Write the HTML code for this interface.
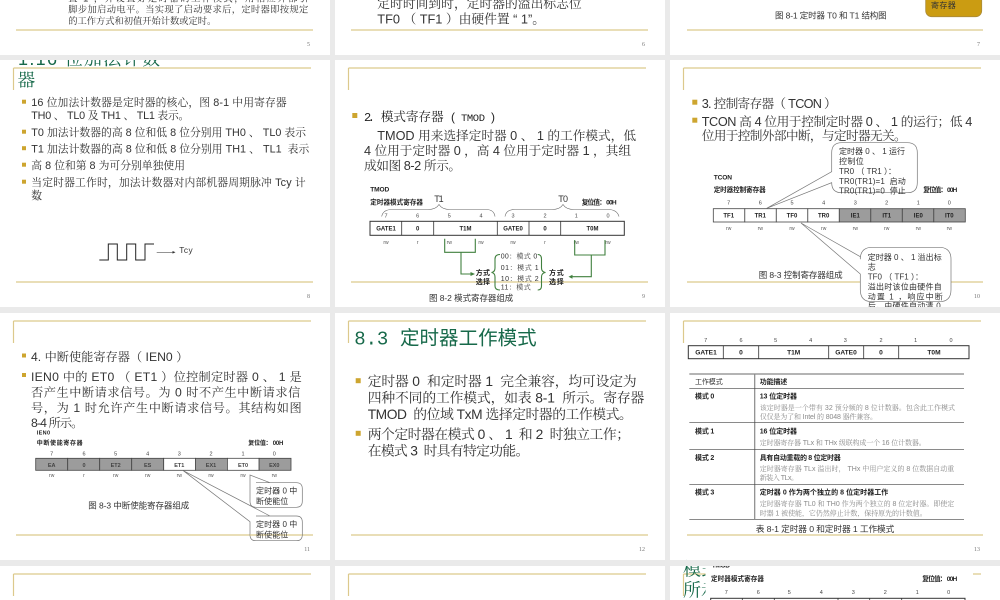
<!DOCTYPE html>
<html lang="zh"><head><meta charset="utf-8"><title>定时器</title>
<style>
html,body{margin:0;padding:0;background:#fff;width:1000px;height:600px;overflow:hidden}
svg{display:block;filter:blur(.35px)}
text{white-space:pre}
.s{font-family:"Liberation Sans","Noto Serif CJK SC",serif;fill:#333}
.h{font-family:"Liberation Sans","Noto Sans CJK SC",sans-serif;fill:#333}
.hb{font-family:"Liberation Sans","Noto Sans CJK SC",sans-serif;fill:#222;font-weight:700}
.g{font-family:"Liberation Sans","Noto Serif CJK SC",serif;fill:#17694a}
.m{font-family:"Liberation Mono","Noto Serif CJK SC",monospace}
.n{font-family:"Liberation Serif",serif;font-size:6px;fill:#777;text-anchor:end}
.c{text-anchor:middle}
.f5{font-size:5px;fill:#555}
.f55{font-size:5.5px;fill:#444}
.f6{font-size:6px}
.f65{font-size:6.6px}
.f7{font-size:7px}
.f8{font-size:8px}
.f85{font-size:8.5px}
.f93{font-size:9.3px}
.f108{font-size:10.8px}
.f122{font-size:12.2px}
.f127{font-size:12.7px}
.f138{font-size:13.8px}
.gy{fill:#8a8a8a}
.hl{stroke:#dcc98c;stroke-width:1.2;fill:none}
.box{fill:#fff;stroke:#333;stroke-width:1}
.cell{fill:#9c9c9c;stroke:#444;stroke-width:.8}
.wc{fill:#fff;stroke:#444;stroke-width:.8}
.gr{fill:none;stroke:#41803f;stroke-width:1.1}
.cal{fill:#fff;stroke:#777;stroke-width:.7}
.bl{fill:#cda52f}
</style></head><body>
<svg width="1000" height="600" viewBox="0 0 1000 600" xmlns="http://www.w3.org/2000/svg">
<defs><clipPath id="c8"><rect x="0" y="60" width="330" height="40"/></clipPath></defs>
<rect width="1000" height="600" fill="#fff"/>

<!-- header + footer frames -->
<path class="hl" d="M13.5 8H311M13.5 8V30" transform="translate(0,60)"/>
<path class="hl" d="M13.5 8H311M13.5 8V30" transform="translate(335,60)"/>
<path class="hl" d="M13.5 8H311M13.5 8V30" transform="translate(670,60)"/>
<path class="hl" d="M13.5 8H311M13.5 8V30" transform="translate(0,313)"/>
<path class="hl" d="M13.5 8H311M13.5 8V30" transform="translate(335,313)"/>
<path class="hl" d="M13.5 8H311M13.5 8V30" transform="translate(670,313)"/>
<path class="hl" d="M13.5 8H311M13.5 8V30" transform="translate(0,566)"/>
<path class="hl" d="M13.5 8H311M13.5 8V30" transform="translate(335,566)"/>
<path class="hl" d="M13.5 8H311M13.5 8V30" transform="translate(670,566)"/>
<path class="hl" d="M16 30H313M351 30H648M687 30H983M16 282H313M351 282H648M687 282H983M16 535H313M351 535H648M687 535H983"/>

<text class="n" x="310" y="46">5</text><text class="n" x="645" y="46">6</text><text class="n" x="980" y="46">7</text>
<text class="n" x="310" y="298">8</text><text class="n" x="645" y="298">9</text><text class="n" x="980" y="298">10</text>
<text class="n" x="310" y="551">11</text><text class="n" x="645" y="551">12</text><text class="n" x="980" y="551">13</text>

<!-- slide 5 -->
<text class="s f93" x="68.3" y="1.5" textLength="240">置 1 &#xFF0C;并设置好定时器的工作模式&#xFF0C;用相应外部引</text>
<text class="s f93" x="68.3" y="12.5" textLength="240">脚步加启动电平。当实现了启动要求后&#xFF0C;定时器即按规定</text>
<text class="s f93" x="68.3" y="24" textLength="148">的工作方式和初值开始计数或定时。</text>

<!-- slide 6 -->
<text class="s" font-size="12.8" x="377.3" y="8" textLength="204.4">定时时间到时&#xFF0C;定时器的溢出标志位</text>
<text class="s" font-size="12.8" x="377.3" y="23.5" textLength="167.7">TF0 &#xFF08; TF1 &#xFF09;由硬件置 “ 1”。</text>

<!-- slide 7 -->
<text class="h f85" x="775" y="18.5" textLength="111.7">图 8-1 定时器 T0 和 T1 结构图</text>
<rect x="925.7" y="-12" width="56" height="28.7" rx="6" fill="#cb9c12" stroke="#a98a3a" stroke-width=".8"/>
<text class="h f8" x="931" y="8" textLength="24.7">寄存器</text>

<!-- slide 8 -->
<g clip-path="url(#c8)"><text class="g" font-size="18" x="18" y="65" textLength="142">1.16 位加法计数</text></g>
<text class="g" font-size="17.7" x="17.5" y="86">器</text>
<rect class="bl" x="22" y="99.7" width="4" height="4"/>
<text class="s f108" x="31.3" y="106" textLength="255.4">16 位加法计数器是定时器的核心&#xFF0C;图 8-1 中用寄存器</text>
<text class="s f108" x="31.3" y="119" textLength="158">TH0 、 TL0 及 TH1 、 TL1 表示。</text>
<rect class="bl" x="22" y="129.7" width="4" height="4"/>
<text class="s f108" x="31.3" y="136" textLength="274.7">T0 加法计数器的高 8 位和低 8 位分别用 TH0 、 TL0 表示</text>
<rect class="bl" x="22" y="146.2" width="4" height="4"/>
<text class="s f108" x="31.3" y="152.5" textLength="278">T1 加法计数器的高 8 位和低 8 位分别用 TH1 、 TL1  表示</text>
<rect class="bl" x="22" y="162.7" width="4" height="4"/>
<text class="s f108" x="31.3" y="169" textLength="153.7">高 8 位和第 8 为可分别单独使用</text>
<rect class="bl" x="22" y="179.7" width="4" height="4"/>
<text class="s f108" x="31.3" y="186" textLength="274.4">当定时器工作时&#xFF0C;加法计数器对内部机器周期脉冲 Tcy 计</text>
<text class="s f108" x="31.3" y="199" textLength="15.4">数。</text>
<path d="M99.3 260H108.3V244H117.3V260H126.7V244H135.7V260H145V244H154" fill="none" stroke="#222" stroke-width="1"/>
<path d="M156.7 252.3H173" stroke="#555" stroke-width=".7"/><path d="M172.5 251L175.5 252.3L172.5 253.6Z" fill="#333"/>
<text class="h" font-size="8.3" x="179.3" y="253" textLength="13.4">Tcy</text>

<!-- slide 9 -->
<rect class="bl" x="352.3" y="113" width="5" height="5"/>
<text class="m" font-size="12" x="364" y="121" fill="#222" textLength="11">2.</text>
<text class="s f127" x="380.7" y="121" style="fill:#222" textLength="63">模式寄存器</text>
<text class="s" font-size="12" x="451" y="121" style="fill:#222">(</text>
<text class="m" font-size="10.5" x="461" y="121" fill="#222" textLength="24">TMOD</text>
<text class="s" font-size="12" x="491" y="121" style="fill:#222">)</text>
<text class="s f127" x="377.3" y="140" textLength="258.7">TMOD 用来选择定时器 0 、 1 的工作模式&#xFF0C;低</text>
<text class="s f127" x="364" y="155" textLength="267">4 位用于定时器 0 &#xFF0C;高 4 位用于定时器 1 &#xFF0C;其组</text>
<text class="s f127" x="364" y="170" textLength="97">成如图 8-2 所示。</text>

<text class="hb f65" x="370.3" y="191.5" textLength="19">TMOD</text>
<text class="hb f65" x="370.3" y="204.5" textLength="52.7">定时器模式寄存器</text>
<text class="h" font-size="9" x="434.3" y="202" textLength="9.4">T1</text>
<text class="h" font-size="9" x="558.3" y="202" textLength="9.7">T0</text>
<text class="hb f65" x="581.7" y="204.5" textLength="35">复位值&#xFF1A; 00H</text>
<path d="M381.7 216.5Q383 209.5 392 209.5H428Q436 209.5 439 204.5Q442 209.5 450 209.5H486Q494 209.5 495 216.5M505 216.5Q506 209.5 515 209.5H552Q560 209.5 563 204.5Q566 209.5 574 209.5H608Q617 209.5 619 216.5" fill="none" stroke="#666" stroke-width=".6"/>
<text class="c h f55" x="386" y="217.5">7</text><text class="c h f55" x="417.7" y="217.5">6</text><text class="c h f55" x="449.3" y="217.5">5</text><text class="c h f55" x="481" y="217.5">4</text><text class="c h f55" x="513" y="217.5">3</text><text class="c h f55" x="545" y="217.5">2</text><text class="c h f55" x="576.3" y="217.5">1</text><text class="c h f55" x="608" y="217.5">0</text>
<rect class="box" x="370" y="221.3" width="254.3" height="14"/>
<path d="M401.7 221.3V235.3M433.7 221.3V235.3M497.3 221.3V235.3M529 221.3V235.3M560.7 221.3V235.3" stroke="#333" stroke-width=".8"/>
<text class="hb c f6" x="386" y="230.5">GATE1</text><text class="hb c f6" x="417.7" y="230.5">0</text><text class="hb c f6" x="465.5" y="230.5">T1M</text><text class="hb c f6" x="513" y="230.5">GATE0</text><text class="hb c f6" x="545" y="230.5">0</text><text class="hb c f6" x="592.5" y="230.5">T0M</text>
<text class="h c f5" x="386" y="244">rw</text><text class="h c f5" x="417.7" y="244">r</text><text class="h c f5" x="449.3" y="244">rw</text><text class="h c f5" x="481" y="244">rw</text><text class="h c f5" x="513" y="244">rw</text><text class="h c f5" x="545" y="244">r</text><text class="h c f5" x="576.3" y="244">rw</text><text class="h c f5" x="608" y="244">rw</text>
<path class="gr" d="M444.7 238.7V252.3H475.3V238.7M461 252.3V274H471M574.7 240V255H605V240M591.3 255V276.7H572"/>
<path d="M470.5 272L475 274L470.5 276ZM572.5 274.7L568.5 276.7L572.5 278.7Z" fill="#41803f"/>
<path class="gr" d="M500 254.5Q495 254.5 495 259V268Q495 272 491.5 272.5Q495 273 495 277V286Q495 290 500 290M537.7 254.5Q541.5 254.5 541.5 259V268Q541.5 272 545.5 272.5Q541.5 273 541.5 277V286Q541.5 290 537.7 290"/>
<text class="hb f7" x="475.7" y="275" textLength="14.3">方式</text><text class="hb f7" x="475.7" y="284" textLength="14.3">选择</text>
<text class="hb f7" x="549" y="275" textLength="14.7">方式</text><text class="hb f7" x="549" y="284" textLength="14.7">选择</text>
<text class="s f7" x="500.7" y="258.5" textLength="36.6">00&#xFF1A;模式 0</text>
<text class="s f7" x="500.7" y="270" textLength="38">01&#xFF1A;模式 1</text>
<text class="s f7" x="500.7" y="281" textLength="38">10&#xFF1A;模式 2</text>
<text class="s f7" x="500.7" y="289.5" textLength="30">11&#xFF1A;模式</text>
<text class="h f85" x="429" y="301" textLength="84.3">图 8-2 模式寄存器组成</text>

<!-- slide 10 -->
<rect class="bl" x="692.3" y="99.7" width="5" height="5"/>
<text class="s f127" x="701.7" y="108" textLength="135">3. 控制寄存器&#xFF08; TCON &#xFF09;</text>
<rect class="bl" x="692.3" y="117.7" width="5" height="5"/>
<text class="s f127" x="701.7" y="126" textLength="270.6">TCON 高 4 位用于控制定时器 0 、 1 的运行&#xFF1B;低 4</text>
<text class="s f127" x="701.7" y="140" textLength="205">位用于控制外部中断&#xFF0C;与定时器无关。</text>

<text class="hb f65" x="713.7" y="179.5" textLength="18.3">TCON</text>
<text class="hb f65" x="713.7" y="192" textLength="52">定时器控制寄存器</text>
<text class="hb f65" x="923.3" y="192" textLength="34">复位值&#xFF1A; 00H</text>
<text class="h c f55" x="728.7" y="204.5">7</text><text class="h c f55" x="760.3" y="204.5">6</text><text class="h c f55" x="792" y="204.5">5</text><text class="h c f55" x="823.7" y="204.5">4</text><text class="h c f55" x="855.3" y="204.5">3</text><text class="h c f55" x="886.7" y="204.5">2</text><text class="h c f55" x="918.3" y="204.5">1</text><text class="h c f55" x="949.3" y="204.5">0</text>
<rect class="wc" x="713.3" y="208.7" width="31.5" height="13.3"/><rect class="wc" x="744.8" y="208.7" width="31.5" height="13.3"/><rect class="wc" x="776.3" y="208.7" width="31.5" height="13.3"/><rect class="wc" x="807.8" y="208.7" width="31.5" height="13.3"/>
<rect class="cell" x="839.3" y="208.7" width="31.5" height="13.3"/><rect class="cell" x="870.8" y="208.7" width="31.5" height="13.3"/><rect class="cell" x="902.3" y="208.7" width="31.5" height="13.3"/><rect class="cell" x="933.8" y="208.7" width="31.5" height="13.3"/>
<text class="hb c f6" x="728.7" y="217.5">TF1</text><text class="hb c f6" x="760.3" y="217.5">TR1</text><text class="hb c f6" x="792" y="217.5">TF0</text><text class="hb c f6" x="823.7" y="217.5">TR0</text><text class="hb c f6" x="855.3" y="217.5">IE1</text><text class="hb c f6" x="886.7" y="217.5">IT1</text><text class="hb c f6" x="918.3" y="217.5">IE0</text><text class="hb c f6" x="949.3" y="217.5">IT0</text>
<text class="h c f5" x="728.7" y="230">rw</text><text class="h c f5" x="760.3" y="230">rw</text><text class="h c f5" x="792" y="230">rw</text><text class="h c f5" x="823.7" y="230">rw</text><text class="h c f5" x="855.3" y="230">rw</text><text class="h c f5" x="886.7" y="230">rw</text><text class="h c f5" x="918.3" y="230">rw</text><text class="h c f5" x="949.3" y="230">rw</text>
<text class="h f85" x="758.7" y="278" textLength="84">图 8-3 控制寄存器组成</text>
<path class="cal" d="M841.7 142.7H907.3Q917.3 142.7 917.3 152.7V182.7Q917.3 192.7 907.3 192.7H841.7Q831.7 192.7 831.7 182.7L766.7 208.3L831.7 171.7V152.7Q831.7 142.7 841.7 142.7Z"/>
<text class="h f8" x="839" y="154" textLength="66">定时器 0 、 1 运行</text>
<text class="h f8" x="839" y="164" textLength="24.7">控制位</text>
<text class="h f8" x="839" y="174" textLength="57">TR0 &#xFF08; TR1 &#xFF09;&#xFF1A;</text>
<text class="h f8" x="839" y="184" textLength="66.7">TR0(TR1)=1  启动</text>
<text class="h f8" x="839" y="193.3" textLength="66.7">TR0(TR1)=0  停止</text>
<path class="cal" d="M872.3 247.3H939Q951 247.3 951 259.3V289.7Q951 301.7 939 301.7H872.3Q860.3 301.7 860.3 289.7V274L801 223L860.3 256.7V259.3Q860.3 247.3 872.3 247.3Z"/>
<text class="h f8" x="867.7" y="260" textLength="74">定时器 0 、 1 溢出标</text>
<text class="h f8" x="867.7" y="269.7">志</text>
<text class="h f8" x="867.7" y="279.3" textLength="55.3">TF0 &#xFF08; TF1 &#xFF09;&#xFF1A;</text>
<text class="h f8" x="867.7" y="289.3" textLength="74">溢出时该位由硬件自</text>
<text class="h f8" x="867.7" y="299.3" textLength="75">动置 1 &#xFF0C;响应中断</text>
<text class="h f8" x="867.7" y="308.5" textLength="73">后&#xFF0C;由硬件自动清 0</text>

<!-- slide 11 -->
<rect class="bl" x="22" y="353.5" width="4" height="4"/>
<text class="s f122" x="31" y="361" textLength="157.3">4. 中断使能寄存器&#xFF08; IEN0 &#xFF09;</text>
<rect class="bl" x="22" y="373" width="4" height="4"/>
<text class="s f122" x="31" y="381" textLength="270.7">IEN0 中的 ET0 &#xFF08; ET1 &#xFF09;位控制定时器 0 、 1 是</text>
<text class="s f122" x="31" y="396.5" textLength="269.3">否产生中断请求信号。为 0 时不产生中断请求信</text>
<text class="s f122" x="31" y="412" textLength="270.7">号&#xFF0C;为 1 时允许产生中断请求信号。其结构如图</text>
<text class="s f122" x="31" y="427" textLength="52.3">8-4 所示。</text>
<text class="hb" font-size="5.5" x="36.7" y="434.5" textLength="13.3">IEN0</text>
<text class="hb f6" x="36.7" y="445" textLength="46">中断使能寄存器</text>
<text class="hb f6" x="248.3" y="445" textLength="35">复位值&#xFF1A; 00H</text>
<text class="h c f55" x="51.7" y="455.5">7</text><text class="h c f55" x="84" y="455.5">6</text><text class="h c f55" x="115.7" y="455.5">5</text><text class="h c f55" x="147.7" y="455.5">4</text><text class="h c f55" x="179.3" y="455.5">3</text><text class="h c f55" x="211" y="455.5">2</text><text class="h c f55" x="243" y="455.5">1</text><text class="h c f55" x="274.3" y="455.5">0</text>
<rect class="cell" x="35.7" y="458.3" width="32" height="12"/><rect class="cell" x="67.7" y="458.3" width="32" height="12"/><rect class="cell" x="99.7" y="458.3" width="32" height="12"/><rect class="cell" x="131.7" y="458.3" width="32" height="12"/><rect class="wc" x="163.7" y="458.3" width="31.7" height="12"/><rect class="cell" x="195.4" y="458.3" width="32" height="12"/><rect class="wc" x="227.4" y="458.3" width="31.7" height="12"/><rect class="cell" x="259.1" y="458.3" width="31.9" height="12"/>
<text class="hb c f55" x="51.7" y="467">EA</text><text class="hb c f55" x="84" y="467">0</text><text class="hb c f55" x="115.7" y="467">ET2</text><text class="hb c f55" x="147.7" y="467">ES</text><text class="hb c f55" x="179.3" y="467">ET1</text><text class="hb c f55" x="211" y="467">EX1</text><text class="hb c f55" x="243" y="467">ET0</text><text class="hb c f55" x="274.3" y="467">EX0</text>
<text class="h c f5" x="51.7" y="477">rw</text><text class="h c f5" x="84" y="477">r</text><text class="h c f5" x="115.7" y="477">rw</text><text class="h c f5" x="147.7" y="477">rw</text><text class="h c f5" x="179.3" y="477">rw</text><text class="h c f5" x="211" y="477">rw</text><text class="h c f5" x="243" y="477">rw</text><text class="h c f5" x="274.3" y="477">rw</text>
<text class="h f85" x="88.3" y="508.5" textLength="101">图 8-3 中断使能寄存器组成</text>
<path class="cal" d="M256 482.7H296.3Q302.3 482.7 302.3 488.7V501.3Q302.3 507.3 296.3 507.3H256Q250 507.3 250 501.3V486.7L250 475L270 482.7Z"/>
<text class="h f8" x="256" y="493.5" textLength="41.3">定时器 0 中</text>
<text class="h f8" x="256" y="504" textLength="32.3">断使能位</text>
<path class="cal" d="M256 516H296.3Q302.3 516 302.3 522V534.7Q302.3 540.7 296.3 540.7H256Q250 540.7 250 534.7V521.7L183.3 470.7L270 516Z"/>
<path class="hl" d="M250 535H302"/>
<text class="h f8" x="256" y="527" textLength="41.3">定时器 0 中</text>
<text class="h f8" x="256" y="537.5" textLength="32.3">断使能位</text>

<!-- slide 12 -->
<text class="m" font-size="19" x="354.3" y="344.3" fill="#17694a" textLength="34">8.3</text>
<text font-family="Noto Sans CJK SC,sans-serif" font-size="19.5" x="400" y="344.3" fill="#17694a" textLength="136.7">定时器工作模式</text>
<rect class="bl" x="355.7" y="378.2" width="5" height="5"/>
<text class="s f138" x="367.7" y="386" textLength="269">定时器 0  和定时器 1  完全兼容&#xFF0C;均可设定为</text>
<text class="s f138" x="367.7" y="402.5" textLength="276.6">四种不同的工作模式&#xFF0C;如表 8-1  所示。寄存器</text>
<text class="s f138" x="367.7" y="419" textLength="265">TMOD  的位域 TxM 选择定时器的工作模式。</text>
<rect class="bl" x="355.7" y="430.8" width="5" height="5"/>
<text class="s f138" x="367.7" y="439" textLength="262.3">两个定时器在模式 0 、 1  和 2  时独立工作&#xFF1B;</text>
<text class="s f138" x="367.7" y="455.5" textLength="161.6">在模式 3  时具有特定功能。</text>

<!-- slide 13 -->
<text class="h c f55" x="705.7" y="342">7</text><text class="h c f55" x="741" y="342">6</text><text class="h c f55" x="775.7" y="342">5</text><text class="h c f55" x="810.7" y="342">4</text><text class="h c f55" x="845.3" y="342">3</text><text class="h c f55" x="881" y="342">2</text><text class="h c f55" x="915.7" y="342">1</text><text class="h c f55" x="951" y="342">0</text>
<rect class="box" x="688.3" y="345.7" width="280.7" height="13"/>
<path d="M723.3 345.7V358.7M758.7 345.7V358.7M828.7 345.7V358.7M863.7 345.7V358.7M898.7 345.7V358.7" stroke="#333" stroke-width=".8"/>
<text class="hb c f65" x="706" y="354.5">GATE1</text><text class="hb c f65" x="741" y="354.5">0</text><text class="hb c f65" x="793.7" y="354.5">T1M</text><text class="hb c f65" x="846" y="354.5">GATE0</text><text class="hb c f65" x="881" y="354.5">0</text><text class="hb c f65" x="934" y="354.5">T0M</text>
<path d="M689.3 374H964M754.7 374V519.3" stroke="#888" stroke-width="1.2" fill="none"/>
<path d="M689.3 388.7H964M689.3 422.7H964M689.3 449.3H964M689.3 484.3H964M689.3 519.3H964" stroke="#444" stroke-width=".7"/>
<text class="h f7" x="695" y="384" textLength="27.7">工作模式</text><text class="hb f7" x="759.7" y="384" textLength="27.6">功能描述</text>
<text class="hb f7" x="695" y="398.5" textLength="19.3">模式 0</text><text class="hb f7" x="759.7" y="398.5" textLength="37.3">13 位定时器</text>
<text class="s gy f7" x="759.7" y="410" textLength="195.3">该定时器是一个带有 32 预分频的 8 位计数器。包含此工作模式</text>
<text class="s gy f7" x="759.7" y="419" textLength="117.3">仅仅是为了和 Intel 的 8048 器件兼容。</text>
<text class="hb f7" x="695" y="433.5" textLength="19.3">模式 1</text><text class="hb f7" x="759.7" y="433.5" textLength="37.3">16 位定时器</text>
<text class="s gy f7" x="759.7" y="445" textLength="166">定时器寄存器 TLx 和 THx 级联构成一个 16 位计数器。</text>
<text class="hb f7" x="695" y="460" textLength="19.3">模式 2</text><text class="hb f7" x="759.7" y="460" textLength="81">具有自动重载的 8 位定时器</text>
<text class="s gy f7" x="759.7" y="471" textLength="194.6">定时器寄存器 TLx 溢出时&#xFF0C; THx 中用户定义的 8 位数据自动重</text>
<text class="s gy f7" x="759.7" y="480" textLength="38.3">新装入 TLx。</text>
<text class="hb f7" x="695" y="494.5" textLength="19.3">模式 3</text><text class="hb f7" x="759.7" y="494.5" textLength="128.6">定时器 0 作为两个独立的 8 位定时器工作</text>
<text class="s gy f7" x="759.7" y="506" textLength="194.6">定时器寄存器 TL0 和 TH0 作为两个独立的 8 位定时器。即使定</text>
<text class="s gy f7" x="759.7" y="515.5" textLength="167">时器 1 被使能&#xFF0C;它仍然停止计数&#xFF0C;保持原先的计数值。</text>
<text class="h" font-size="8.7" x="755.7" y="532" textLength="138.6" fill="#222">表 8-1 定时器 0 和定时器 1 工作模式</text>

<!-- row 4, third slide -->
<text class="g" font-size="18" x="683" y="575.7">模式</text>
<text class="g" font-size="18" x="683" y="596.7">所示</text>
<rect x="705.5" y="563" width="267.5" height="37" fill="#fff"/>
<text class="hb f65" x="711.7" y="567.7" textLength="18.3">TMOD</text>
<text class="hb f65" x="711" y="581" textLength="53">定时器模式寄存器</text>
<text class="hb f65" x="922.3" y="581" textLength="35">复位值&#xFF1A; 00H</text>
<text class="h c f55" x="726.3" y="594">7</text><text class="h c f55" x="758.3" y="594">6</text><text class="h c f55" x="789.3" y="594">5</text><text class="h c f55" x="821.3" y="594">4</text><text class="h c f55" x="853.3" y="594">3</text><text class="h c f55" x="885.3" y="594">2</text><text class="h c f55" x="917.3" y="594">1</text><text class="h c f55" x="948.7" y="594">0</text>
<rect class="box" x="710.7" y="598.3" width="254.3" height="10"/>
<path d="M742.3 598V600M774.3 598V600M838 598V600M869.7 598V600M901.7 598V600" stroke="#333" stroke-width=".8"/>

<!-- gray gutters -->
<g fill="#eaeaea">
<rect x="0" y="55" width="1000" height="5"/>
<rect x="0" y="307" width="1000" height="6"/>
<rect x="0" y="560" width="1000" height="6"/>
<rect x="330" y="0" width="5" height="600"/>
<rect x="665" y="0" width="5" height="600"/>
</g>
</svg>
</body></html>
